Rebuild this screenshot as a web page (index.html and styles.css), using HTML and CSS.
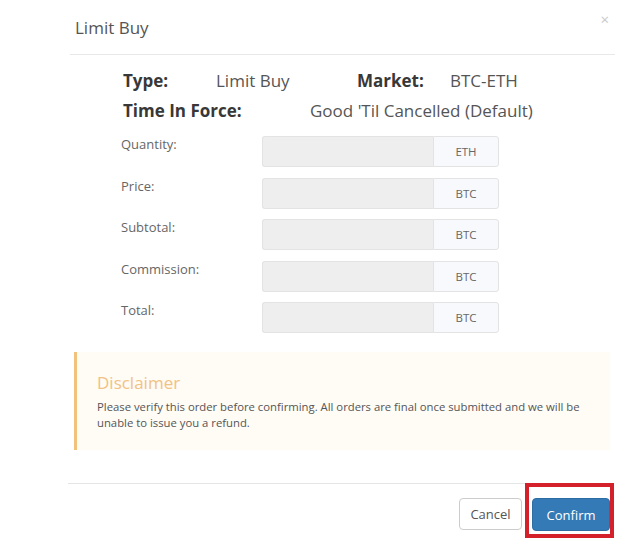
FILE: index.html
```html
<!DOCTYPE html>
<html>
<head>
<meta charset="utf-8">
<link rel="stylesheet" href="styles.css">
</head>
<body>
<div class="modal">
  <div class="modal-header">
    <div class="title">Limit Buy</div>
    <span class="close">×</span>
  </div>
  <div class="modal-body">
    <div class="summary">
      <div class="row1">
        <span class="lbl">Type:</span>
        <span class="val">Limit Buy</span>
        <span class="lbl">Market:</span>
        <span class="val">BTC-ETH</span>
      </div>
      <div class="row2">
        <span class="lbl tif">Time In Force:</span>
        <span class="val">Good 'Til Cancelled (Default)</span>
      </div>
    </div>
    <div class="form">
      <div class="frow"><label>Quantity:</label><div class="igroup"><div class="input"></div><div class="addon">ETH</div></div></div>
      <div class="frow"><label>Price:</label><div class="igroup"><div class="input"></div><div class="addon">BTC</div></div></div>
      <div class="frow"><label>Subtotal:</label><div class="igroup"><div class="input"></div><div class="addon">BTC</div></div></div>
      <div class="frow"><label>Commission:</label><div class="igroup"><div class="input"></div><div class="addon">BTC</div></div></div>
      <div class="frow"><label>Total:</label><div class="igroup"><div class="input"></div><div class="addon">BTC</div></div></div>
    </div>
    <div class="disclaimer">
      <div class="d-title">Disclaimer</div>
      <p class="d-text">Please verify this order before confirming. All orders are final once submitted and we will be unable to issue you a refund.</p>
    </div>
  </div>
  <div class="modal-footer">
    <button class="btn btn-default">Cancel</button>
    <div class="hl"><button class="btn btn-primary">Confirm</button></div>
  </div>
</div>
</body>
</html>
```
FILE: styles.css
```css
html, body {
  margin: 0;
  padding: 0;
  background: #ffffff;
  font-family: "Open Sans", "Noto Sans", sans-serif;
  color: #555;
}
.modal {
  position: relative;
  margin-left: 68px;
  width: 547px;
  padding-bottom: 14px;
}
.modal-header {
  position: relative;
  margin-left: 2px;
  padding: 16px 0 14px 5px;
  border-bottom: 1px solid #e8e8e8;
}
.title {
  font-size: 17px;
  line-height: 24px;
  color: #555;
}
.close {
  position: absolute;
  top: 10px;
  right: 6px;
  font-size: 15px;
  line-height: 18px;
  color: #c9c9c9;
}
.modal-body {
  padding-top: 11px;
}
.summary {
  padding-left: 55px;
  font-size: 17px;
  line-height: 30px;
  color: #444;
}
.row1 {
  display: grid;
  grid-template-columns: 93px 141px 93px auto;
}
.row2 {
  display: flex;
}
.lbl {
  font-weight: 700;
  color: #383838;
}
.val {
  color: #555;
}
.tif {
  width: 187px;
}
.form {
  margin-top: 10px;
  padding-left: 53px;
  display: flex;
  flex-direction: column;
  gap: 10.5px;
}
.frow {
  display: flex;
  align-items: flex-start;
}
.frow label {
  width: 141px;
  font-size: 13px;
  line-height: 16px;
  color: #666;
}
.igroup {
  display: flex;
  height: 31px;
}
.input {
  width: 170px;
  background: #eeeeee;
  border: 1px solid #e3e3e3;
  border-right: none;
  border-radius: 3px 0 0 3px;
}
.addon {
  width: 64px;
  display: flex;
  align-items: center;
  justify-content: center;
  background: #f8f9fc;
  border: 1px solid #e3e3e3;
  border-radius: 0 3px 3px 0;
  font-size: 11.5px;
  color: #666;
}
.disclaimer {
  margin: 19px 5px 0 6px;
  height: 98px;
  box-sizing: border-box;
  border-left: 3px solid #f2c27c;
  background: #fffbf5;
  padding: 18.5px 20px 0 20px;
}
.d-title {
  font-size: 17px;
  line-height: 24px;
  color: #f1c283;
}
.d-text {
  margin: 4px 0 0;
  font-size: 11.3px;
  line-height: 16px;
  color: #555;
}
.modal-footer {
  margin-top: 33px;
  margin-right: 5px;
  border-top: 1px solid #e5e5e5;
  padding-top: 14px;
  display: flex;
  justify-content: flex-end;
  align-items: flex-start;
  gap: 10px;
}
.btn {
  font-family: "Open Sans", "Noto Sans", sans-serif;
  font-size: 13px;
  border-radius: 4px;
  padding: 0;
  margin: 0;
  cursor: pointer;
  display: block;
}
.btn-default {
  width: 63px;
  height: 32px;
  background: #fff;
  border: 1px solid #cccccc;
  color: #555;
}
.hl {
  position: relative;
}
.hl::after {
  content: "";
  position: absolute;
  left: -7px;
  top: -15px;
  width: 81px;
  height: 47px;
  border: 4px solid #d4202a;
  pointer-events: none;
}
.btn-primary {
  width: 78px;
  height: 33px;
  background: #337ab7;
  border: 1px solid #2e6da4;
  color: #fff;
}
```
